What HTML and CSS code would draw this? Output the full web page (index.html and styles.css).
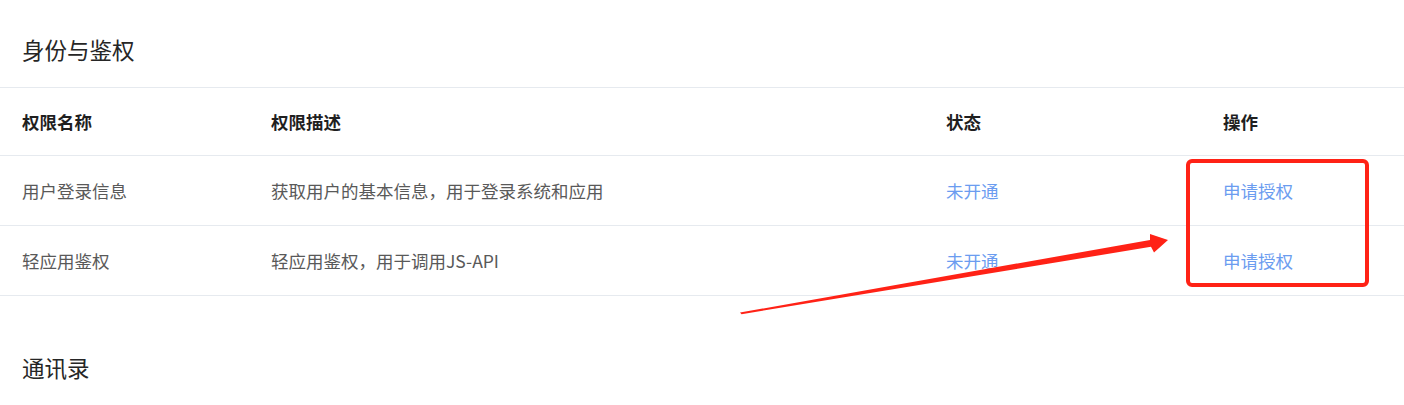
FILE: index.html
```html
<!DOCTYPE html>
<html lang="zh-CN">
<head>
    <meta charset="UTF-8">
    <meta name="viewport" content="width=device-width, initial-scale=1.0">
    <title>权限管理</title>
    <link rel="stylesheet" href="styles.css">
</head>
<body>
    <div class="page">
        <section class="perm-section">
            <h2 class="section-title">身份与鉴权</h2>
            <div class="perm-table">
                <div class="perm-row perm-head">
                    <div class="cell">权限名称</div>
                    <div class="cell">权限描述</div>
                    <div class="cell">状态</div>
                    <div class="cell">操作</div>
                </div>
                <div class="perm-row">
                    <div class="cell">用户登录信息</div>
                    <div class="cell">获取用户的基本信息，用于登录系统和应用</div>
                    <div class="cell status">未开通</div>
                    <div class="cell"><a class="apply-link" href="#">申请授权</a></div>
                </div>
                <div class="perm-row">
                    <div class="cell">轻应用鉴权</div>
                    <div class="cell">轻应用鉴权，用于调用JS-API</div>
                    <div class="cell status">未开通</div>
                    <div class="cell"><a class="apply-link" href="#">申请授权</a></div>
                </div>
            </div>
        </section>

        <section class="perm-section">
            <h2 class="section-title">通讯录</h2>
        </section>

        <!-- screenshot annotation: red box + arrow -->
        <div class="mark-box"></div>
        <svg class="mark-arrow" width="1404" height="405" viewBox="0 0 1404 405">
            <polygon points="740,312.6 1150,240 1150,234 1168,240 1154,252.5 1151,246.8 741.5,314.2" fill="#ff2216"/>
        </svg>
    </div>
</body>
</html>
```

FILE: styles.css
```css
body {
    margin: 0;
    background: #fff;
    font-family: "Noto Sans CJK SC", "Noto Sans", sans-serif;
    color: #595959;
}

.page {
    position: relative;
    width: 1404px;
    height: 405px;
    overflow: hidden;
}

.section-title {
    margin: 0;
    height: 87px;
    box-sizing: border-box;
    padding: 34px 22px 0;
    font-size: 22.5px;
    line-height: 30px;
    font-weight: 400;
    color: #262626;
}

.perm-section + .perm-section {
    margin-top: 22px;
}

.perm-table {
    border-top: 1px solid #e6eaef;
}

.perm-row {
    display: grid;
    grid-template-columns: 249px 675px 277px 1fr;
    height: 70px;
    border-bottom: 1px solid #e6eaef;
    box-sizing: border-box;
    align-items: center;
    font-size: 17.5px;
}

.perm-head {
    height: 68px;
    font-weight: 700;
    color: #1f1f1f;
}

.cell {
    padding-left: 22px;
    white-space: nowrap;
}

.status {
    color: #6b9cf0;
}

.apply-link {
    color: #6b9cf0;
    text-decoration: none;
}

.mark-box {
    position: absolute;
    left: 1186px;
    top: 159px;
    width: 175px;
    height: 120px;
    border: 4px solid #ff2216;
    border-radius: 6px;
}

.mark-arrow {
    position: absolute;
    left: 0;
    top: 0;
}
```
